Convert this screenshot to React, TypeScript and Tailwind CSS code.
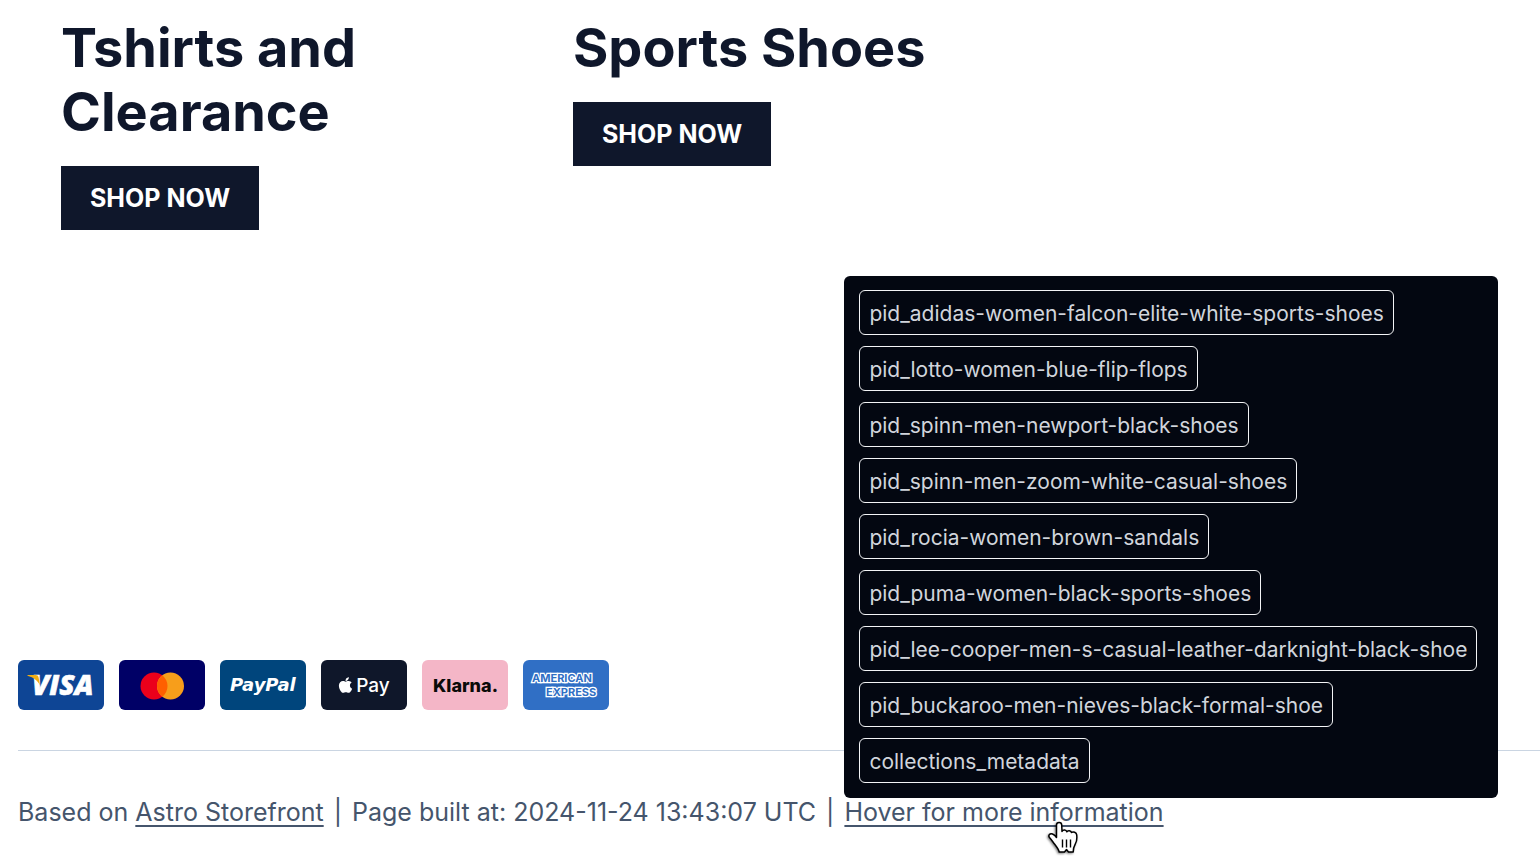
import { useState } from "react";
import { FaApple } from "react-icons/fa";

type Collection = { title: string; href: string };

const collections: Collection[] = [
  { title: "Tshirts and Clearance", href: "#tshirts-and-clearance" },
  { title: "Sports Shoes", href: "#sports-shoes" },
];

/* cache tags listed in the popup */
const tags = [
  "pid_adidas-women-falcon-elite-white-sports-shoes",
  "pid_lotto-women-blue-flip-flops",
  "pid_spinn-men-newport-black-shoes",
  "pid_spinn-men-zoom-white-casual-shoes",
  "pid_rocia-women-brown-sandals",
  "pid_puma-women-black-sports-shoes",
  "pid_lee-cooper-men-s-casual-leather-darknight-black-shoe",
  "pid_buckaroo-men-nieves-black-formal-shoe",
  "collections_metadata",
];

const cardClass = "h-[50px] w-[86px] rounded-md";

function Visa() {
  return (
    <svg viewBox="0 0 86 50" role="img" aria-label="Visa" className={`${cardClass} bg-[#0e4595]`}>
      <text
        x="14"
        y="35"
        fill="#fff"
        stroke="#fff"
        strokeWidth="0.6"
        className="font-['Open_Sans'] text-[28px] font-extrabold italic"
      >
        VISA
      </text>
      {/* gold wing of the V */}
      <path d="M9.500 15h8c1.800 0 2.700.8 3.100 2.400l1.400 8.100C20 20.800 15.500 17.400 9.500 15.800z" fill="#f2ae14" />
    </svg>
  );
}

function Mastercard() {
  return (
    <svg viewBox="0 0 86 50" role="img" aria-label="Mastercard" className={`${cardClass} bg-[#000066]`}>
      <circle cx="35" cy="26" r="13.500" fill="#eb001b" />
      <circle cx="51.500" cy="26" r="13.500" fill="#f79e1b" />
      <path d="M43.250 15.300a13.500 13.500 0 0 1 0 21.400a13.500 13.500 0 0 1 0-21.400z" fill="#ff5f00" />
    </svg>
  );
}

function PayPal() {
  return (
    <svg viewBox="0 0 86 50" role="img" aria-label="PayPal" className={`${cardClass} bg-[#00457c]`}>
      <text x="10" y="31" fill="#fff" className="font-['DejaVu_Sans'] text-[18px] font-bold italic">
        PayPal
      </text>
    </svg>
  );
}

function ApplePay() {
  return (
    <div
      role="img"
      aria-label="Apple Pay"
      className={`${cardClass} flex items-center justify-center gap-[3px] bg-[#0f172a] text-white`}
    >
      <FaApple className="mb-px h-[18px] w-[15px]" />
      <span className="text-[19px] leading-none font-medium">Pay</span>
    </div>
  );
}

function Klarna() {
  return (
    <svg viewBox="0 0 86 50" role="img" aria-label="Klarna" className={`${cardClass} bg-[#f4b6c7]`}>
      <text x="11" y="32" fill="#0a0b09" className="font-[Inter] text-[18px] font-extrabold">
        Klarna.
      </text>
    </svg>
  );
}

function Amex() {
  return (
    <svg viewBox="0 0 86 50" role="img" aria-label="American Express" className={`${cardClass} bg-[#306fc5]`}>
      <g
        fill="#306fc5"
        stroke="#fff"
        strokeWidth="2.500"
        paintOrder="stroke"
        className="font-[Inter] text-[11px] font-bold"
      >
        <text x="9" y="22">
          AMERICAN
        </text>
        <text x="23" y="36">
          EXPRESS
        </text>
      </g>
    </svg>
  );
}

function HandPointer() {
  return (
    <svg
      viewBox="0 0 32 34"
      aria-hidden="true"
      className="pointer-events-none absolute top-[22px] left-[203px] h-[34px] w-[32px] drop-shadow-[-1px_1px_1px_rgba(0,0,0,0.5)]"
    >
      <path
        d="M9.500 17.500V5c0-3.500 5.200-3.500 5.200 0l.3 6.500c1-2 4.300-1.800 4.800.3c1-1.800 4.200-1.400 4.700.7c1.700-1.300 4.900-.2 5.200 2.300c.4 3.600.2 6.200-1.200 8.700c-1.300 2.400-2.300 4-2.300 8.500h-4.700l-2-2.500l-2 2.500h-5.300c-.5-2.800-2.700-5.300-4.700-8c-1.500-2-2.600-3.700-5-6.500c-1.700-2.200.5-4.500 3-3.500c1.500.7 3 2 4 3.500z"
        fill="#fff"
        stroke="#000"
        strokeWidth="1.500"
        strokeLinejoin="round"
      />
      <path d="M15.500 19.500v8M19.500 19.500v8M23.500 19.500v8" stroke="#000" strokeWidth="1.400" />
    </svg>
  );
}

function PageInfo() {
  const [open, setOpen] = useState(true);

  return (
    <span className="relative">
      <button
        type="button"
        aria-describedby="cache-tags"
        onMouseEnter={() => setOpen(true)}
        onClick={() => setOpen(!open)}
        className="cursor-pointer underline decoration-2 underline-offset-4"
      >
        Hover for more information
      </button>
      {open && (
        <div
          id="cache-tags"
          role="tooltip"
          className="absolute bottom-full left-0 flex flex-col items-start gap-[11px] rounded-md bg-[#030711] pt-[14px] pr-[21px] pb-[15px] pl-[15px] text-[21px] text-gray-300"
        >
          {tags.map((tag) => (
            <span
              key={tag}
              className="rounded-md border border-gray-100 px-[9px] pt-[7px] pb-[5px] leading-[31px] whitespace-nowrap"
            >
              {tag}
            </span>
          ))}
        </div>
      )}
      <HandPointer />
    </span>
  );
}

export default function App() {
  return (
    <div className="flex min-h-screen flex-col overflow-x-hidden bg-white font-[Inter,sans-serif] text-slate-900">
      <main className="grid grid-cols-3 gap-[57px] pt-4 pl-[61px]">
        {collections.map((c) => (
          <section key={c.title} className="flex flex-col items-start gap-[22px]">
            <h2 className="text-[54px] leading-[64px] font-bold">{c.title}</h2>
            <a
              href={c.href}
              className="bg-slate-900 px-[29px] py-[14px] text-[25px] leading-[36px] font-bold text-white"
            >
              SHOP NOW
            </a>
          </section>
        ))}
      </main>

      <footer className="mt-auto pb-[41px] pl-[18px]">
        {/* payment methods */}
        <div className="mb-10 flex gap-[15px]">
          <Visa />
          <Mastercard />
          <PayPal />
          <ApplePay />
          <Klarna />
          <Amex />
        </div>

        <div className="flex gap-[10px] border-t border-slate-300 pt-[47px] text-[25px] leading-[28px] text-slate-600">
          <span>
            Based on{" "}
            <a href="#astro-storefront" className="underline decoration-2 underline-offset-4">
              Astro Storefront
            </a>
          </span>
          <span>|</span>
          <span>Page built at: 2024-11-24 13:43:07 UTC</span>
          <span>|</span>
          <PageInfo />
        </div>
      </footer>
    </div>
  );
}
